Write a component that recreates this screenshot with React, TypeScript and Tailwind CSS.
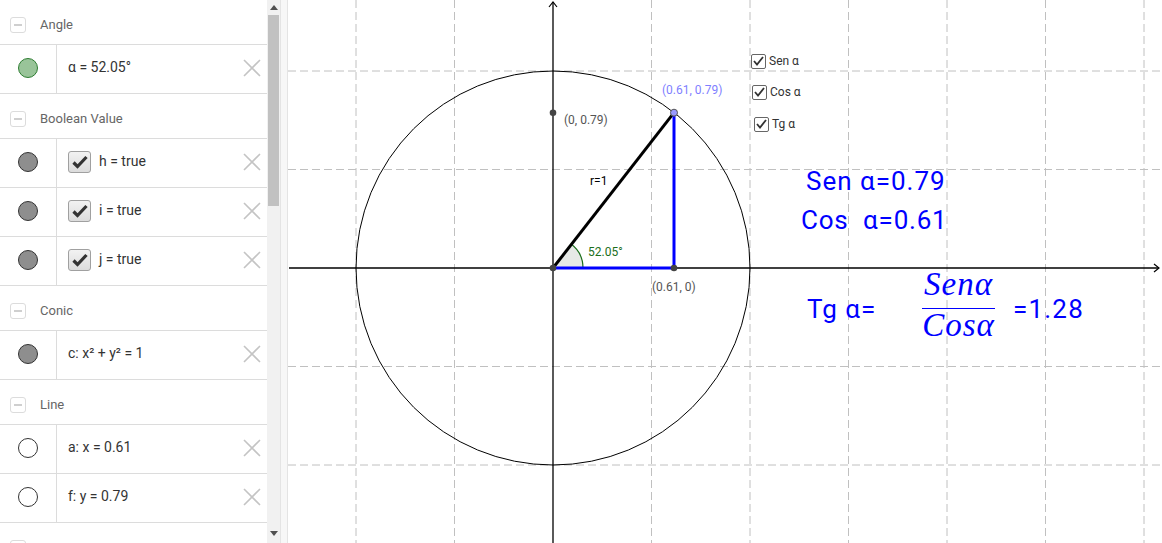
import React from "react";

type Item = {
  text: string;
  dot: "green" | "gray" | "white";
  checkbox?: boolean;
};

type Group = {
  title: string;
  items: Item[];
};

const groups: Group[] = [
  { title: "Angle", items: [{ text: "α = 52.05°", dot: "green" }] },
  {
    title: "Boolean Value",
    items: [
      { text: "h = true", dot: "gray", checkbox: true },
      { text: "i = true", dot: "gray", checkbox: true },
      { text: "j = true", dot: "gray", checkbox: true },
    ],
  },
  { title: "Conic", items: [{ text: "c: x² + y² = 1", dot: "gray" }] },
  {
    title: "Line",
    items: [
      { text: "a: x = 0.61", dot: "white" },
      { text: "f: y = 0.79", dot: "white" },
    ],
  },
  // next group is scrolled below the fold, only its box shows
  { title: "", items: [] },
];

const dotClass = {
  green: "bg-[#99c499] border-[#2e7d32]",
  gray: "bg-[#8e8e8e] border-[#333]",
  white: "bg-white border-[#333]",
};

function DeleteIcon() {
  return (
    <svg width="18" height="18" viewBox="0 0 18 18" className="mr-[6px]">
      <path d="M1 1 L17 17 M17 1 L1 17" stroke="#c4c4c4" strokeWidth="1.6" />
    </svg>
  );
}

function BoolBox() {
  return (
    <div className="mr-[8px] flex h-[22px] w-[23px] items-center justify-center rounded-[3px] border border-[#a0a0a0] bg-gradient-to-b from-[#f2f2f2] to-[#dcdcdc]">
      <svg width="16" height="14" viewBox="0 0 16 14">
        <path d="M1.5 7.5 L5.5 11.5 L14.5 2" fill="none" stroke="#333" strokeWidth="3.2" />
      </svg>
    </div>
  );
}

function Header({ title }: { title: string }) {
  return (
    <div className="flex h-[44px] items-center pt-[6px]">
      <div className="ml-[10px] flex h-[16px] w-[16px] items-center justify-center rounded-[3px] border border-[#dcdcdc]">
        <div className="h-[1.5px] w-[8px] bg-[#cfcfcf]" />
      </div>
      {title && <span className="ml-[14px] text-[13px] text-[#666]">{title}</span>}
    </div>
  );
}

function Row({ item }: { item: Item }) {
  return (
    <div className="flex h-[49px] border-t border-[#dcdcdc]">
      <div className="flex w-[57px] items-center justify-center border-r border-[#dcdcdc] pb-[3px]">
        <div className={`h-[20px] w-[20px] rounded-full border ${dotClass[item.dot]}`} />
      </div>
      <div className="flex flex-1 items-center pb-[3px] pl-[11px] text-[14px] text-[#333]">
        {item.checkbox && <BoolBox />}
        <span className="flex-1">{item.text}</span>
        <DeleteIcon />
      </div>
    </div>
  );
}

function CanvasCheck({ label, left, top }: { label: string; left: number; top: number }) {
  return (
    <div className="absolute flex items-center" style={{ left, top }}>
      <div className="flex h-[15px] w-[15px] items-center justify-center rounded-[2px] border border-[#666] bg-white">
        <svg width="11" height="10" viewBox="0 0 11 10">
          <path d="M1 5 L4 8.5 L10 1" fill="none" stroke="#333" strokeWidth="1.8" />
        </svg>
      </div>
      <span className="ml-[3px] text-[12px] text-[#333]">{label}</span>
    </div>
  );
}

export default function App() {
  const ox = 553;
  const oy = 268;
  const r = 197;
  const px = 674;
  const py = 112.7;
  const a = (52.05 * Math.PI) / 180;
  const ar = 30;

  const vGrid = [356, 454.5, 651.5, 750, 848.5, 947, 1045.5, 1144];
  const hGrid = [71, 169.5, 366.5, 465];

  return (
    <div className="flex h-[543px] w-[1162px] overflow-hidden bg-white font-['Roboto','Liberation_Sans',sans-serif]">
      <div className="h-full w-[267px] overflow-hidden">
        {groups.map((g, i) => (
          <div key={i}>
            <Header title={g.title} />
            {g.items.length > 0 && (
              <div className="border-b border-[#dcdcdc]">
                {g.items.map((it) => (
                  <Row key={it.text} item={it} />
                ))}
              </div>
            )}
          </div>
        ))}
      </div>

      <div className="relative h-full w-[13px] bg-[#f1f1f1]">
        <div className="absolute left-[3px] top-[5px] h-0 w-0 border-x-[4px] border-b-[5px] border-x-transparent border-b-[#505050]" />
        <div className="absolute left-[1px] top-[15px] h-[191px] w-[11px] bg-[#c1c1c1]" />
        <div className="absolute bottom-[7px] left-[3px] h-0 w-0 border-x-[4px] border-t-[5px] border-x-transparent border-t-[#505050]" />
      </div>
      <div className="h-full w-[8px] border-x border-[#e4e4e4] bg-[#f7f7f7]" />

      <div className="relative h-full flex-1">
        <svg className="absolute inset-0" width="874" height="543" viewBox="288 0 874 543">
          {vGrid.map((x) => (
            <line key={x} x1={x} y1={0} x2={x} y2={543} stroke="#c0c0c0" strokeDasharray="8 4" />
          ))}
          {hGrid.map((y) => (
            <line key={y} x1={288} y1={y} x2={1162} y2={y} stroke="#c0c0c0" strokeDasharray="8 4" />
          ))}

          <line x1={289} y1={oy} x2={1159} y2={oy} stroke="#000" strokeWidth="1.3" />
          <path d="M1154 264 L1159 268 L1154 272" fill="none" stroke="#000" strokeWidth="1.2" />
          <line x1={ox} y1={2} x2={ox} y2={543} stroke="#000" strokeWidth="1.3" />
          <path d="M549 7 L553 2 L557 7" fill="none" stroke="#000" strokeWidth="1.2" />

          <circle cx={ox} cy={oy} r={r} fill="none" stroke="#000" strokeWidth="1" />

          <path
            d={`M${ox} ${oy} L${ox + ar} ${oy} A${ar} ${ar} 0 0 0 ${ox + ar * Math.cos(a)} ${oy - ar * Math.sin(a)} Z`}
            fill="#e6e9e6"
            stroke="none"
          />
          <path
            d={`M${ox + ar} ${oy} A${ar} ${ar} 0 0 0 ${ox + ar * Math.cos(a)} ${oy - ar * Math.sin(a)}`}
            fill="none"
            stroke="#1b6e1b"
            strokeWidth="1.2"
          />

          <line x1={ox} y1={oy} x2={px} y2={py} stroke="#000" strokeWidth="3" />
          <line x1={px} y1={py} x2={px} y2={oy} stroke="#0000ff" strokeWidth="3" />
          <line x1={ox} y1={oy} x2={px} y2={oy} stroke="#0000ff" strokeWidth="3" />

          <circle cx={ox} cy={oy} r="3.3" fill="#444" />
          <circle cx={px} cy={oy} r="3.3" fill="#444" />
          <circle cx={ox} cy={py} r="3.3" fill="#444" />
          <circle cx={px} cy={py} r="3.5" fill="#9a9aff" stroke="#555" strokeWidth="1" />

          <text x={564} y={124} fontSize="12" fill="#555">(0, 0.79)</text>
          <text x={662} y={94} fontSize="12" fill="#7f7fff">(0.61, 0.79)</text>
          <text x={652} y={291} fontSize="12" fill="#555">(0.61, 0)</text>
          <text x={590} y={185} fontSize="12" fill="#000">r=1</text>
          <text x={588} y={256} fontSize="12" fill="#1b6e1b">52.05°</text>

          <text x={806} y={190} fontSize="26" letterSpacing="1" fill="#0000ff" className="whitespace-pre">Sen α=0.79</text>
          <text x={801} y={229} fontSize="26" letterSpacing="0.8" fill="#0000ff" className="whitespace-pre">Cos  α=0.61</text>
          <text x={807} y={318} fontSize="26" letterSpacing="1" fill="#0000ff" className="whitespace-pre">Tg α=</text>

          <text
            x={958.5}
            y={295}
            fontSize="33"
            fill="#0000ff"
            textAnchor="middle"
            fontStyle="italic"
            letterSpacing="1"
            fontFamily="'Liberation Serif', serif"
          >
            Senα
          </text>
          <line x1={922} y1={308.5} x2={995} y2={308.5} stroke="#0000ff" strokeWidth="1.2" />
          <text
            x={958.5}
            y={336}
            fontSize="33"
            fill="#0000ff"
            textAnchor="middle"
            fontStyle="italic"
            letterSpacing="1"
            fontFamily="'Liberation Serif', serif"
          >
            Cosα
          </text>
          <text x={1013} y={318} fontSize="26" letterSpacing="1.2" fill="#0000ff">=1.28</text>
        </svg>

        <CanvasCheck label="Sen α" left={463} top={52} />
        <CanvasCheck label="Cos α" left={464} top={83} />
        <CanvasCheck label="Tg α" left={466} top={115} />
      </div>
    </div>
  );
}
